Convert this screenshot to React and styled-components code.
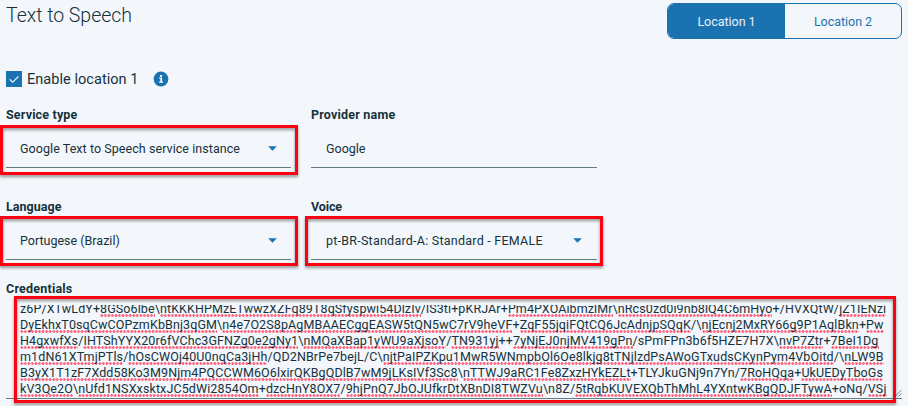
import React from 'react';
import styled, { createGlobalStyle } from 'styled-components';

const ink = '#15323c';
const blue = '#1b72b0';
const paper = '#f3f6fb';

const GlobalStyle = createGlobalStyle`
  *, *::before, *::after { box-sizing: border-box; }
  body {
    margin: 0;
    overflow: hidden;
    background: ${paper};
    color: ${ink};
    font: 400 12.5px/20px Roboto, "Noto Sans", sans-serif;
  }
`;

const Page = styled.main`
  position: relative;
  height: 406px;
  padding: 0 6px;
  overflow: hidden;
`;

const Header = styled.header`
  display: flex;
  justify-content: space-between;
  height: 69px;
`;

const Title = styled.h1`
  margin: 1px 0 0;
  font-size: 19.5px;
  font-weight: 300;
  line-height: 30px;
  letter-spacing: -0.03px;
`;

const Tabs = styled.div`
  display: flex;
  width: 235px;
  height: 36px;
  margin-top: 3px;
  border: 1px solid ${blue};
  border-radius: 7px;
  overflow: hidden;
`;

const Tab = styled.button`
  flex: ${(p) => (p.$active ? '0 0 117px' : 1)};
  padding: 1px 0 0;
  border: 0;
  background: ${(p) => (p.$active ? blue : 'transparent')};
  color: ${(p) => (p.$active ? '#e9f3fb' : blue)};
  font: 400 12.5px/33px Roboto, sans-serif;
  letter-spacing: -0.03px;
`;

const EnableRow = styled.div`
  display: flex;
  align-items: center;
  height: 20px;
`;

const Checkbox = styled.span`
  display: flex;
  width: 16px;
  height: 16px;
  margin-right: 5px;
  background: ${blue};
`;

const EnableLabel = styled.span`
  width: 125.5px;
  padding-top: 2px;
  font-size: 14.5px;
  letter-spacing: 0.05px;
`;

const Grid = styled.section`
  display: grid;
  grid-template-columns: 285px 286px;
  column-gap: 20px;
  row-gap: 29px;
  margin-top: 16px;
`;

const FieldBox = styled.div`
  display: flex;
  flex-direction: column;
`;

const Label = styled.label`
  font-weight: 700;
  letter-spacing: ${(p) => p.$spacing ?? 0}px;
`;

const Control = styled.div`
  display: flex;
  align-items: center;
  justify-content: space-between;
  height: 41px;
  margin-top: 2px;
  padding: 3px ${(p) => p.$indent}px 0 ${(p) => p.$indent}px;
  border-bottom: 1px solid #647b82;
  letter-spacing: ${(p) => p.$spacing ?? 0}px;
  white-space: nowrap;
`;

const Credentials = styled.section`
  display: flex;
  flex-direction: column;
  margin-top: 19px;
`;

const TextArea = styled.div`
  position: relative;
  width: 896px;
  height: 94px;
  margin-top: 6px;
  padding-left: 14px;
  border-bottom: 1px solid #647b82;
  overflow: hidden;
`;

const Lines = styled.div`
  margin-top: -4px;
`;

const Line = styled.div`
  display: flex;
  height: 16px;
  line-height: 16px;
  white-space: pre;
  letter-spacing: ${(p) => p.$spacing}px;
`;

const Misspelled = styled.span`
  background: radial-gradient(circle at 50% 50%, #ff5f78 1px, #ff5f7800 1.7px)
    left bottom / 3.55px 3px repeat-x;
`;

const Grip = styled.svg`
  position: absolute;
  right: 0;
  bottom: 1px;
`;

const Highlight = styled.div`
  position: absolute;
  left: ${(p) => p.$x}px;
  top: ${(p) => p.$y}px;
  width: ${(p) => p.$w}px;
  height: ${(p) => p.$h}px;
  border: 3px solid #ff0012;
  filter: drop-shadow(0 2px 1.5px rgba(0, 0, 0, 0.42));
  pointer-events: none;
`;

const Caret = () => (
  <svg width="9" height="5" viewBox="0 0 9 5">
    <path d="M0.2 0.2h8.6L4.5 4.8z" fill={blue} />
  </svg>
);

function Field({ label, labelSpacing, value, spacing, select, indent = 15 }) {
  return (
    <FieldBox>
      <Label $spacing={labelSpacing}>{label}</Label>
      <Control $spacing={spacing} $indent={indent}>
        {value}
        {select && <Caret />}
      </Control>
    </FieldBox>
  );
}

// Text between asterisks carries the spell-check underline.
const credentialLines = [
  [0.1, 'z6P/XTwLdY+*8GSo6lbe*\\*ntKKKHPMzETwwzXZFq89T8qSfyspwi54DlzIv*/lS3ti+pKRJAr+*Pm4PXOAibmzlMr*\\*nRcs0zd0i9nb8lQ4C6mHyo*+/HVXQtW/*jZ1IENzi*'],
  [0.115, '*DyEkhxT0sqCwCOPzmKbBnj3qGM*\\*n4e7O2S8pAgMBAAECggEASW5tQN5wC7rV9heVF*+*ZqF55jqiFQtCQ6JcAdnjpSQqK*/\\*njEcnj2MxRY66g9P1AqlBkn*+*Pw*'],
  [0.116, '*H4gxwfXs*/*IHTShYYX20r6fVChc3GFNZg0e2gNy1*\\*nMQaXBap1yWU9aXjsoY*/*TN931yj*++*7yNjEJ0njMV419gPn*/sPmFPn3b6f5HZE7H7X\\*nvP7Ztr*+*7BeI1Dg*'],
  [0.122, '*m1dN61XTmjPTls*/*hOsCWOj40U0nqCa3jHh*/QD2NBrPe7bejL/C\\*njtPaIPZKpu1MwR5WNmpbOl6Oe8lkjg8tTNjlzdPsAWoGTxudsCKynPym4VbOitd*/\\*nLW9B*'],
  [0.117, '*B3yX1T1zF7Xdd58Ko3M9Njm4PQCCWM6O6lxirQKBgQDlB7wM9jLKsIVf3Sc8*\\*nTTWJ9aRC1Fe8ZxzHYkEZLt*+TLYJkuGNj9n7Yn/*7RoHQqa*+*UkUEDyTboGs*'],
  [0.113, '*kV3Qe2O*\\*nUfd1NSXxsktxJC5dWi2854Om*+*dzcHnY8OX7*/*9hjPnQ7JbOJUfkrDtXBnDI8TWZVu*\\n8Z/*5tRqbKUVEXQbThMhL4YXntwKBgQDJFTywA*+oNq/*VSj*'],
];

export default function App() {
  return (
    <Page>
      <GlobalStyle />
      <Header>
        <Title>Text to Speech</Title>
        <Tabs>
          <Tab $active>Location 1</Tab>
          <Tab>Location 2</Tab>
        </Tabs>
      </Header>

      <EnableRow>
        <Checkbox>
          <svg width="16" height="16" viewBox="0 0 16 16" fill="none">
            <path d="M3.6 8.2l3.1 3 5.7-5.7" stroke="#e6f1f9" strokeWidth="1.2" />
          </svg>
        </Checkbox>
        <EnableLabel>Enable location 1</EnableLabel>
        <svg width="16" height="16" viewBox="0 0 16 16">
          <circle cx="8" cy="8" r="7.4" fill={blue} />
          <path d="M7 3.9h2.1v1.8H7zM6.2 6.6h2.9v4h1v1.2H6.1v-1.2h1.2V7.8H6.2z" fill="#f3f8fc" />
        </svg>
      </EnableRow>

      <Grid>
        <Field label="Service type" labelSpacing={0.17} value="Google Text to Speech service instance" spacing={0.06} indent={14} select />
        <Field label="Provider name" labelSpacing={0.2} value="Google" />
        <Field label="Language" labelSpacing={0.04} value="Portugese (Brazil)" indent={14} select />
        <Field label="Voice" labelSpacing={-0.1} value="pt-BR-Standard-A: Standard - FEMALE" spacing={0.24} select />
      </Grid>

      <Credentials>
        <Label $spacing={0.21}>Credentials</Label>
        <TextArea>
          <Lines>
            {credentialLines.map(([spacing, text]) => (
              <Line key={text} $spacing={spacing}>
                {text.split('*').map((part, i) =>
                  i % 2 ? <Misspelled key={i}>{part}</Misspelled> : <span key={i}>{part}</span>
                )}
              </Line>
            ))}
          </Lines>
          <Grip width="8" height="8" viewBox="0 0 8 8" fill="none">
            <path d="M1 7.5L7.5 1M4.5 7.5l3-3" stroke="#59666b" strokeWidth="0.8" />
          </Grip>
        </TextArea>
      </Credentials>

      <Highlight $x={0} $y={125} $w={298} $h={50} />
      <Highlight $x={0} $y={216} $w={298} $h={50} />
      <Highlight $x={305} $y={216} $w={298} $h={50} />
      <Highlight $x={14} $y={296} $w={882} $h={107} />
    </Page>
  );
}
